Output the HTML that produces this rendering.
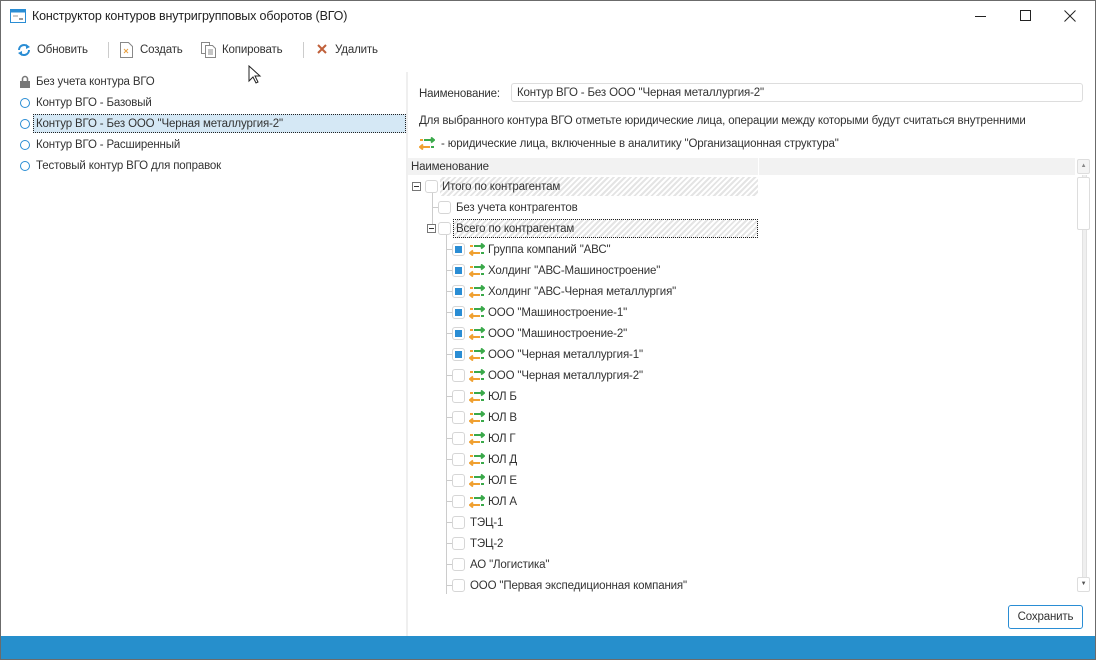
<!DOCTYPE html>
<html><head><meta charset="utf-8"><style>
*{margin:0;padding:0;box-sizing:border-box}
body{width:1096px;height:660px;position:relative;overflow:hidden;background:#fff;font-family:"Liberation Sans",Arial,sans-serif;font-size:11.5px;line-height:16px;letter-spacing:-0.15px;color:#333}
.a{position:absolute;white-space:nowrap}
.cb{position:absolute;width:13px;height:13px;border:1px solid #d6d6d6;border-radius:3px;background:#fff}
.cb.on::after{content:"";position:absolute;left:2px;top:2px;width:7px;height:7px;background:#2a8dd4}
.ex{position:absolute;width:9px;height:9px;border:1px solid #777;background:#fff}
.ex::after{content:"";position:absolute;left:1px;top:3px;width:5px;height:1px;background:#333}
.rb{position:absolute;width:10px;height:10px;border:1.5px solid #2a8dd4;border-radius:50%}
.hatch{position:absolute;height:19px;background:repeating-linear-gradient(135deg,#fff 0 2px,#e4e4e4 2px 4px)}
</style></head><body>
<div class="a" style="left:0;top:0;width:1096px;height:660px;border:1px solid #6b6b6b;z-index:9;pointer-events:none"></div>
<!-- title -->
<svg class="a" style="left:10px;top:9px" width="16" height="14"><rect x="0.5" y="0.5" width="15" height="13" fill="#fff" stroke="#2a8dd4"/><rect x="0.5" y="0.5" width="15" height="3" fill="#2a8dd4"/><line x1="3" y1="7" x2="8" y2="7" stroke="#999"/><rect x="9" y="9" width="4" height="2" fill="#999"/></svg>
<div class="a" style="left:32px;top:8px;font-size:12.5px;color:#222">Конструктор контуров внутригрупповых оборотов (ВГО)</div>
<div class="a" style="left:975px;top:16px;width:11px;height:1px;background:#222"></div>
<div class="a" style="left:1020px;top:10px;width:11px;height:11px;border:1px solid #222"></div>
<svg class="a" style="left:1064px;top:10px" width="12" height="12"><path d="M.5 .5l11 11M11.5 .5l-11 11" stroke="#222"/></svg>
<!-- toolbar -->
<svg class="a" style="left:16px;top:43px" width="16" height="14"><path d="M3 7a5 5 0 0 1 9-3" fill="none" stroke="#2a8dd4" stroke-width="2"/><path d="M13 7a5 5 0 0 1-9 3" fill="none" stroke="#2a8dd4" stroke-width="2"/><path d="M10 1l4 3-4 2z M6 13l-4-3 4-2z" fill="#2a8dd4"/></svg>
<div class="a" style="left:37px;top:42px">Обновить</div>
<div class="a" style="left:108px;top:42px;width:1px;height:16px;background:#ccc"></div>
<svg class="a" style="left:120px;top:42px" width="13" height="16"><path d="M.5 .5h8l4 4v11H.5z" fill="#fff" stroke="#888"/><path d="M4 7l4 4M8 7l-4 4" stroke="#e8a040"/></svg>
<div class="a" style="left:140px;top:42px">Создать</div>
<svg class="a" style="left:201px;top:42px" width="15" height="16"><path d="M.5 .5h8v11H.5z" fill="#fff" stroke="#888"/><path d="M4.5 3.5h7l3 3v9h-10z" fill="#fff" stroke="#888"/><path d="M7 8h5M7 10h5M7 12h5" stroke="#888"/></svg>
<div class="a" style="left:222px;top:42px">Копировать</div>
<div class="a" style="left:303px;top:42px;width:1px;height:16px;background:#ccc"></div>
<svg class="a" style="left:317px;top:44px" width="10" height="10"><path d="M1 1l8 8M9 1l-8 8" stroke="#c0603a" stroke-width="2"/></svg>
<div class="a" style="left:335px;top:42px">Удалить</div>
<svg class="a" style="left:248px;top:65px" width="14" height="20"><path d="M1 1v15l4-4 3 6 2-1-3-6h5z" fill="#fff" stroke="#222"/></svg>
<!-- left list -->
<svg class="a" style="left:20px;top:75px" width="10" height="13"><path d="M2.5 6V4a2.5 2.5 0 0 1 5 0v2" fill="none" stroke="#777" stroke-width="1.5"/><rect x="0" y="6" width="10" height="7" fill="#777"/></svg>
<div class="a" style="left:36px;top:74px">Без учета контура ВГО</div>
<div class="rb" style="left:20px;top:98px"></div><div class="a" style="left:36px;top:95px">Контур ВГО - Базовый</div>
<div class="a" style="left:33px;top:114px;width:373px;height:19px;background:#d5e8f5;border:1px dotted #222"></div>
<div class="rb" style="left:20px;top:119px"></div><div class="a" style="left:36px;top:116px">Контур ВГО - Без ООО "Черная металлургия-2"</div>
<div class="rb" style="left:20px;top:140px"></div><div class="a" style="left:36px;top:137px">Контур ВГО - Расширенный</div>
<div class="rb" style="left:20px;top:161px"></div><div class="a" style="left:36px;top:158px">Тестовый контур ВГО для поправок</div>
<div class="a" style="left:406px;top:72px;width:2px;height:564px;background:#efefef"></div>
<!-- right -->
<div class="a" style="left:419px;top:86px">Наименование:</div>
<div class="a" style="left:511px;top:83px;width:572px;height:19px;border:1px solid #ddd;border-radius:3px;padding:1px 5px">Контур ВГО - Без ООО "Черная металлургия-2"</div>
<div class="a" style="left:419px;top:113px">Для выбранного контура ВГО отметьте юридические лица, операции между которыми будут считаться внутренними</div>
<svg class="a" style="left:419px;top:137px" width="16" height="13" id="ic"><path d="M5 3h10M12 0.5l3 2.5-3 2.5" fill="none" stroke="#3aa94a" stroke-width="2"/><path d="M11 10H1M4 7.5l-3 2.5 3 2.5" fill="none" stroke="#f0a030" stroke-width="2"/><path d="M1 3h3" stroke="#f0a030" stroke-width="2"/><path d="M12 10h3" stroke="#3aa94a" stroke-width="2"/></svg>
<div class="a" style="left:441px;top:136px">- юридические лица, включенные в аналитику "Организационная структура"</div>
<div class="a" style="left:408px;top:158px;width:667px;height:17px;background:#f2f2f2"></div>
<div class="a" style="left:758px;top:158px;width:1px;height:17px;background:#fff"></div>
<div class="a" style="left:411px;top:159px">Наименование</div>
<!-- scrollbar -->
<div class="a" style="left:1077px;top:158px;width:13px;height:435px;background:#fff"></div>
<div class="a" style="left:1082px;top:175px;width:5px;height:402px;background:#efefef;border-left:1px solid #e2e2e2;border-right:1px solid #e2e2e2"></div>
<div class="a" style="left:1077px;top:159px;width:13px;height:15px;border:1px solid #ddd;border-radius:2px;background:#f4f4f4;font-size:6px;text-align:center;line-height:13px;color:#888">▲</div>
<div class="a" style="left:1077px;top:177px;width:13px;height:53px;border:1px solid #ddd;border-radius:2px;background:#fff"></div>
<div class="a" style="left:1077px;top:577px;width:13px;height:15px;border:1px solid #ddd;border-radius:2px;background:#fff;font-size:6px;text-align:center;line-height:13px;color:#555">▼</div>
<!-- tree lines -->
<div class="a" style="left:432px;top:192px;width:1px;height:37px;background:#ccc"></div>
<div class="a" style="left:432px;top:207px;width:6px;height:1px;background:#ccc"></div>
<div class="a" style="left:446px;top:234px;width:1px;height:360px;background:#ccc"></div>
<!-- rows -->
<div class="hatch" style="left:440px;top:177px;width:318px"></div>
<div class="ex" style="left:412px;top:182px"></div><div class="cb" style="left:425px;top:180px"></div>
<div class="a" style="left:442px;top:179px">Итого по контрагентам</div>
<div class="cb" style="left:438px;top:201px"></div><div class="a" style="left:456px;top:200px">Без учета контрагентов</div>
<div class="hatch" style="left:453px;top:219px;width:305px;border:1px dotted #222"></div>
<div class="ex" style="left:427px;top:224px"></div><div class="cb" style="left:438px;top:222px"></div>
<div class="a" style="left:456px;top:221px">Всего по контрагентам</div>
<div id="rows"></div>
<script>
var it=[["Группа компаний \"АВС\"",1,1],["Холдинг \"АВС-Машиностроение\"",1,1],["Холдинг \"АВС-Черная металлургия\"",1,1],["ООО \"Машиностроение-1\"",1,1],["ООО \"Машиностроение-2\"",1,1],["ООО \"Черная металлургия-1\"",1,1],["ООО \"Черная металлургия-2\"",0,1],["ЮЛ Б",0,1],["ЮЛ В",0,1],["ЮЛ Г",0,1],["ЮЛ Д",0,1],["ЮЛ Е",0,1],["ЮЛ А",0,1],["ТЭЦ-1",0,0],["ТЭЦ-2",0,0],["АО \"Логистика\"",0,0],["ООО \"Первая экспедиционная компания\"",0,0]];
var ic=document.getElementById('ic').outerHTML.replace(' id="ic"','');
var h='';it.forEach(function(r,i){var y=243+i*21;
h+='<div class="a" style="left:447px;top:'+(y+6)+'px;width:5px;height:1px;background:#ccc"></div>';
h+='<div class="cb'+(r[1]?' on':'')+'" style="left:452px;top:'+y+'px"></div>';
if(r[2])h+=ic.replace('left:419px;top:137px','left:469px;top:'+y+'px');
h+='<div class="a" style="left:'+(r[2]?488:470)+'px;top:'+(y-1)+'px">'+r[0]+'</div>';});
document.getElementById('rows').innerHTML=h;
</script>
<div class="a" style="left:1008px;top:605px;width:75px;height:24px;border:1px solid #2a8dd4;border-radius:3px;text-align:center;line-height:22px">Сохранить</div>
<div class="a" style="left:1px;top:636px;width:1094px;height:23px;background:#268fcc"></div>
</body></html>
